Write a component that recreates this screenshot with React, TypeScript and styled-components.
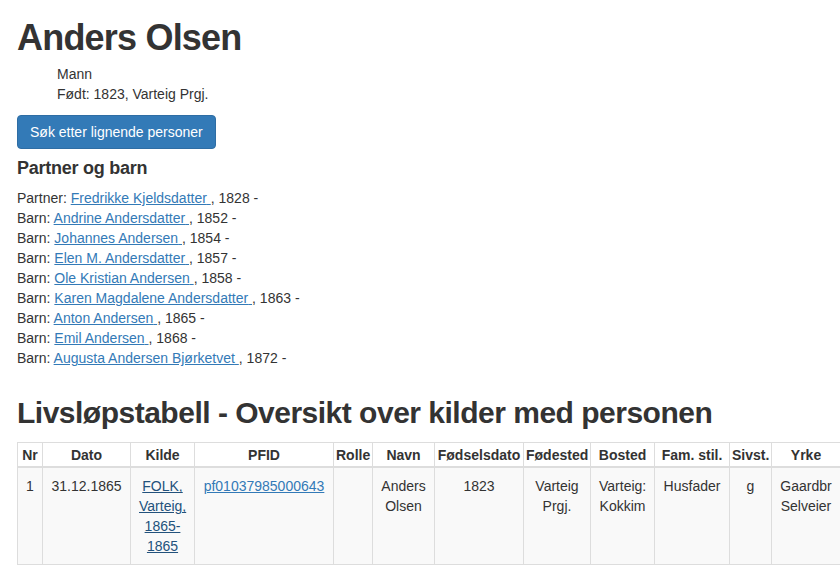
import React from "react";
import styled, { createGlobalStyle } from "styled-components";

const GlobalStyle = createGlobalStyle`
  html, body {
    margin: 0;
    padding: 0;
    background: #fff;
    overflow: hidden;
  }
  body {
    font-family: "Liberation Sans", Arial, Helvetica, sans-serif;
    font-size: 14px;
    line-height: 20px;
    color: #333;
  }
  a {
    color: #337ab7;
    text-decoration: underline;
  }
`;

const Page = styled.div`
  padding: 0 0 0 17px;
`;

const Name = styled.h1`
  font-size: 36px;
  font-weight: bold;
  letter-spacing: -0.8px;
  line-height: 1.1;
  margin: 18px 0 6px;
`;

const Facts = styled.div`
  padding-left: 40px;
  margin-bottom: 11px;
`;

const Button = styled.button`
  display: inline-block;
  font-family: inherit;
  font-size: 14px;
  line-height: 20px;
  padding: 6px 12px;
  color: #fff;
  background: #337ab7;
  border: 1px solid #2e6da4;
  border-radius: 4px;
  cursor: pointer;
`;

const SubTitle = styled.h4`
  font-size: 18px;
  font-weight: bold;
  letter-spacing: -0.25px;
  line-height: 1.1;
  margin: 10px 0 10px;
`;

const Relations = styled.div`
  margin-bottom: 10px;
`;

const SectionTitle = styled.h2`
  font-size: 30px;
  font-weight: bold;
  letter-spacing: -0.5px;
  line-height: 1.1;
  margin: 28px 0 13px;
  white-space: nowrap;
`;

const Table = styled.table`
  border-collapse: collapse;
  table-layout: fixed;
  width: 823px;
  background: #fff;
`;

const Head = styled.th<{ $w: number }>`
  box-sizing: border-box;
  width: ${(p) => p.$w}px;
  border: 1px solid #ddd;
  border-bottom: 2px solid #ddd;
  padding: 2px 2px 1px;
  font-weight: bold;
  text-align: center;
  vertical-align: bottom;
  white-space: nowrap;
  overflow: hidden;
`;

const Row = styled.tr`
  background: #f9f9f9;
`;

const Cell = styled.td`
  border: 1px solid #ddd;
  padding: 8px;
  text-align: center;
  vertical-align: top;
`;

const SourceLink = styled.a`
  color: #23527c;
`;

const relations = [
  { role: "Partner", name: "Fredrikke Kjeldsdatter", year: 1828 },
  { role: "Barn", name: "Andrine Andersdatter", year: 1852 },
  { role: "Barn", name: "Johannes Andersen", year: 1854 },
  { role: "Barn", name: "Elen M. Andersdatter", year: 1857 },
  { role: "Barn", name: "Ole Kristian Andersen", year: 1858 },
  { role: "Barn", name: "Karen Magdalene Andersdatter", year: 1863 },
  { role: "Barn", name: "Anton Andersen", year: 1865 },
  { role: "Barn", name: "Emil Andersen", year: 1868 },
  { role: "Barn", name: "Augusta Andersen Bjørketvet", year: 1872 },
];

const columns: [string, number][] = [
  ["Nr", 25],
  ["Dato", 88],
  ["Kilde", 64],
  ["PFID", 139],
  ["Rolle", 39],
  ["Navn", 62],
  ["Fødselsdato", 89],
  ["Fødested", 67],
  ["Bosted", 64],
  ["Fam. stil.", 75],
  ["Sivst.", 42],
  ["Yrke", 69],
];

const App = () => {
  return (
    <Page>
      <GlobalStyle />
      <Name>Anders Olsen</Name>
      <Facts>
        <div>Mann</div>
        <div>Født: 1823, Varteig Prgj.</div>
      </Facts>
      <Button>Søk etter lignende personer</Button>

      <SubTitle>Partner og barn</SubTitle>
      <Relations>
        {relations.map((r) => (
          <div key={r.name}>
            {r.role}: <a href="#">{r.name} </a>, {r.year} -
          </div>
        ))}
      </Relations>

      <SectionTitle>Livsløpstabell - Oversikt over kilder med personen</SectionTitle>
      <Table>
        <thead>
          <tr>
            {columns.map(([label, w]) => (
              <Head key={label} $w={w}>
                {label}
              </Head>
            ))}
          </tr>
        </thead>
        <tbody>
          <Row>
            <Cell>1</Cell>
            <Cell>31.12.1865</Cell>
            <Cell>
              <SourceLink href="#">FOLK, Varteig, 1865-1865</SourceLink>
            </Cell>
            <Cell>
              <a href="#">pf01037985000643</a>
            </Cell>
            <Cell></Cell>
            <Cell>Anders Olsen</Cell>
            <Cell>1823</Cell>
            <Cell>Varteig Prgj.</Cell>
            <Cell>Varteig: Kokkim</Cell>
            <Cell>Husfader</Cell>
            <Cell>g</Cell>
            <Cell>Gaardbr Selveier</Cell>
          </Row>
        </tbody>
      </Table>
    </Page>
  );
};

export default App;
